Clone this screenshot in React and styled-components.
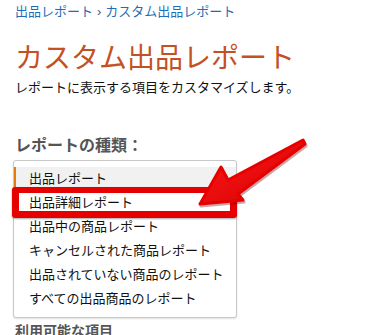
import React from "react";
import styled, { createGlobalStyle } from "styled-components";

const GlobalStyle = createGlobalStyle`
  html, body {
    margin: 0;
    padding: 0;
    background: #fff;
  }
  body {
    font-family: "Liberation Sans", "Noto Sans CJK JP", sans-serif;
    overflow: hidden;
  }
`;

const Page = styled.div`
  position: relative;
  width: 378px;
  height: 335px;
  padding: 3px 15px 0;
  box-sizing: border-box;
  overflow: hidden;
`;

const Breadcrumb = styled.div`
  font-size: 13px;
  line-height: 18px;
  color: #1f6db8;
  span {
    margin: 0 4px;
    color: #555;
  }
`;

const Title = styled.h1`
  margin: 21px 0 0;
  font-size: 28px;
  line-height: 34px;
  font-weight: normal;
  color: #c45123;
`;

const Lead = styled.p`
  margin: 3px 0 0;
  font-size: 13px;
  line-height: 18px;
  color: #111;
`;

const SectionLabel = styled.h3`
  margin: ${(p) => p.$top}px 0 0;
  font-size: ${(p) => p.$size}px;
  line-height: 22px;
  font-weight: bold;
  color: #555;
`;

const ListWrap = styled.div`
  position: relative;
  margin: 3px 0 0 -2px;
  width: 224px;
`;

const ListBox = styled.div`
  height: 158px;
  padding-top: 6px;
  box-sizing: border-box;
  border: 1px solid #c8c8c8;
  border-radius: 3px;
  box-shadow: 0 1px 2px rgba(0, 0, 0, 0.12);
  background: #fff;
`;

const Option = styled.div`
  height: 24px;
  line-height: 24px;
  padding-left: ${(p) => (p.$selected ? 13 : 15)}px;
  font-size: 13px;
  color: #111;
  background: ${(p) => (p.$selected ? "#f1f1f1" : "transparent")};
  border-left: ${(p) => (p.$selected ? "2px solid #e47911" : "none")};
  white-space: nowrap;
`;

const Highlight = styled.div`
  position: absolute;
  left: -1px;
  top: 27px;
  width: 225px;
  height: 31px;
  box-sizing: border-box;
  border: 7px solid #e60000;
  border-top-width: 6px;
  border-bottom-width: 7px;
  border-radius: 3px;
  box-shadow: 0 1px 2px rgba(0, 0, 0, 0.35);
`;

const ArrowLayer = styled.svg`
  position: absolute;
  left: 0;
  top: 0;
  pointer-events: none;
`;

const options = [
  "出品レポート",
  "出品詳細レポート",
  "出品中の商品レポート",
  "キャンセルされた商品レポート",
  "出品されていない商品のレポート",
  "すべての出品商品のレポート",
];

function Arrow() {
  const pts =
    "200,204 221,167 228,180 303,140 305,144 238,194 243,200";
  return (
    <ArrowLayer width="378" height="335" viewBox="0 0 378 335">
      <defs>
        <linearGradient id="ag" x1="0" y1="0" x2="1" y2="1">
          <stop offset="0" stopColor="#ff1a1a" />
          <stop offset="1" stopColor="#d40000" />
        </linearGradient>
      </defs>
      <polygon
        points={pts}
        transform="translate(1,2)"
        fill="#6a0000"
        opacity="0.35"
        stroke="#6a0000"
        strokeWidth="3"
        strokeLinejoin="round"
      />
      <polygon
        points={pts}
        fill="url(#ag)"
        stroke="#e60000"
        strokeWidth="3"
        strokeLinejoin="round"
      />
    </ArrowLayer>
  );
}

export default function App() {
  return (
    <>
      <GlobalStyle />
      <Page>
        <Breadcrumb>
          出品レポート<span>›</span>カスタム出品レポート
        </Breadcrumb>
        <Title>カスタム出品レポート</Title>
        <Lead>レポートに表示する項目をカスタマイズします。</Lead>
        <SectionLabel $top={38} $size={16}>
          レポートの種類：
        </SectionLabel>
        <ListWrap>
          <ListBox>
            {options.map((o, i) => (
              <Option key={o} $selected={i === 0}>
                {o}
              </Option>
            ))}
          </ListBox>
          <Highlight />
        </ListWrap>
        <SectionLabel $top={2} $size={14}>
          利用可能な項目
        </SectionLabel>
        <Arrow />
      </Page>
    </>
  );
}
